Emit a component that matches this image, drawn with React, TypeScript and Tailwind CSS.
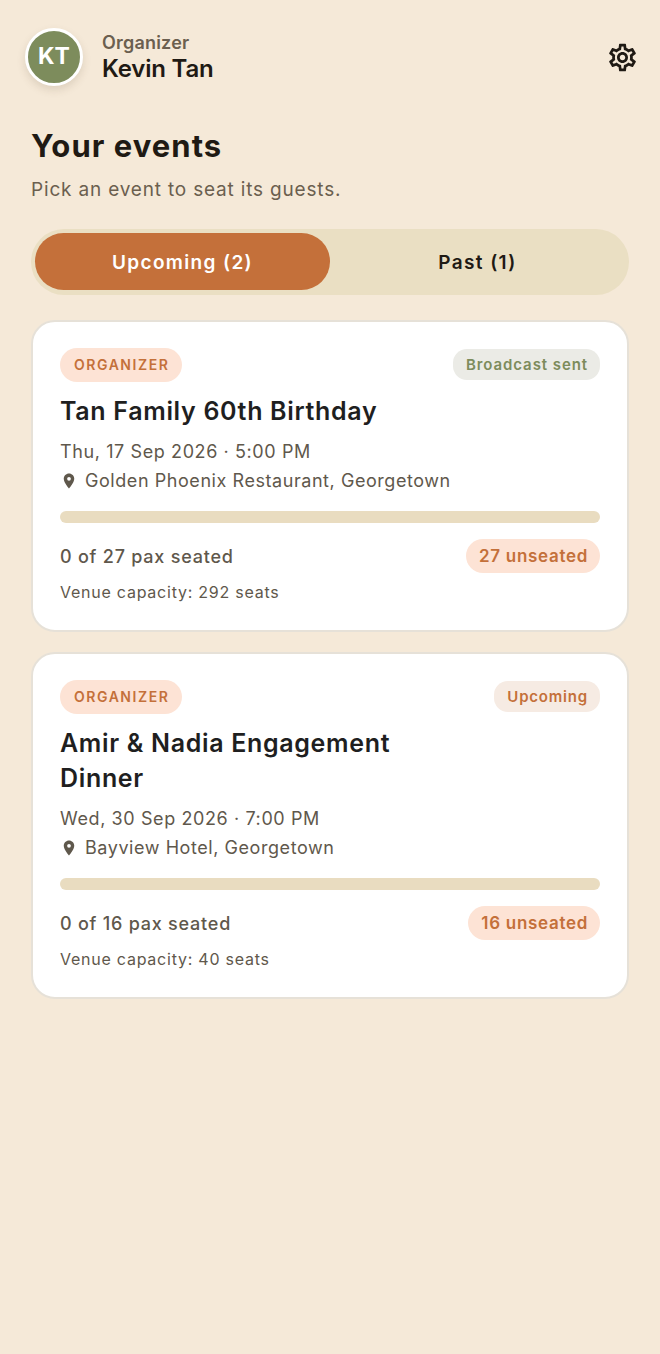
import { MdLocationOn, MdOutlineSettings } from "react-icons/md";

type EventCard = {
  title: string;
  date: string;
  venue: string;
  seated: string;
  unseated: string;
  capacity: string;
  status: string;
  statusClass: string;
};

const events: EventCard[] = [
  {
    title: "Tan Family 60th Birthday",
    date: "Thu, 17 Sep 2026 · 5:00 PM",
    venue: "Golden Phoenix Restaurant, Georgetown",
    seated: "0 of 27 pax seated",
    unseated: "27 unseated",
    capacity: "Venue capacity: 292 seats",
    status: "Broadcast sent",
    statusClass: "bg-[#ebebe6] text-[#7d8c5c] tracking-[0.92px]",
  },
  {
    title: "Amir & Nadia Engagement Dinner",
    date: "Wed, 30 Sep 2026 · 7:00 PM",
    venue: "Bayview Hotel, Georgetown",
    seated: "0 of 16 pax seated",
    unseated: "16 unseated",
    capacity: "Venue capacity: 40 seats",
    status: "Upcoming",
    statusClass: "bg-[#f6ebe3] text-[#c4703a] tracking-[0.8px]",
  },
];

function Card({ event }: { event: EventCard }) {
  return (
    <div className="rounded-[24px] border-2 border-[#e6e1d8] bg-white px-[27px] pt-[26px] pb-[26px]">
      <div className="flex items-start justify-between">
        <span className="flex h-[34px] items-center rounded-full bg-[#fde3d5] pr-[13px] pb-[1px] pl-[14px] text-[14px] font-semibold tracking-[1.55px] text-[#c4703a]">
          ORGANIZER
        </span>
        <span
          className={`mt-[1px] flex h-[31px] items-center rounded-[14px] pt-[2px] pr-[12px] pl-[13px] text-[15px] font-semibold ${event.statusClass}`}
        >
          {event.status}
        </span>
      </div>
      <h2 className="mt-[12px] w-[400px] text-[25px] leading-[35px] font-semibold tracking-[0.67px] text-[#1f1f1f]">
        {event.title}
      </h2>
      <p className="mt-[10px] text-[18px] leading-[26px] tracking-[0.6px] text-[#5f584c]">
        {event.date}
      </p>
      <div className="mt-[3px] flex items-center gap-[7px] text-[18px] leading-[26px] tracking-[0.56px] text-[#5f584c]">
        <MdLocationOn className="h-[18px] w-[18px]" />
        <span>{event.venue}</span>
      </div>
      <div className="mt-[17px] h-[12px] rounded-full bg-[#e9dcc0]" />
      <div className="mt-[16px] flex items-center justify-between">
        <span className="pt-[1px] text-[18px] font-medium tracking-[0.77px] text-[#5f584c]">
          {event.seated}
        </span>
        <span className="flex h-[34px] items-center rounded-full bg-[#fde3d5] pt-[1px] pr-[12px] pl-[13px] text-[17px] font-semibold tracking-[0.7px] text-[#c4703a]">
          {event.unseated}
        </span>
      </div>
      <p className="mt-[7px] text-[16px] leading-[24px] tracking-[0.76px] text-[#5f584c]">
        {event.capacity}
      </p>
    </div>
  );
}

export default function App() {
  return (
    <div className="min-h-[1354px] bg-[#f5e9d8] px-[31px] pt-[28px] font-['Inter',sans-serif] text-[#1f1a14]">
      <header className="-ml-[6px] flex items-center justify-between">
        <div className="flex items-center gap-[19px]">
          <div className="flex h-[58px] w-[58px] items-center justify-center rounded-full border-[3px] border-white bg-[#7d8c5c] pb-[1px] text-[23px] font-bold text-white shadow-[0_4px_8px_rgba(90,70,40,0.15)]">
            KT
          </div>
          <div>
            <p className="text-[18px] leading-[24px] font-semibold tracking-[0.2px] text-[#6b5f4f]">Organizer</p>
            <p className="-mt-[1px] text-[24px] leading-[29px] font-semibold tracking-[-0.2px]">Kevin Tan</p>
          </div>
        </div>
        <MdOutlineSettings className="-mr-[10px] h-[33px] w-[33px]" />
      </header>

      <h1 className="mt-[40px] text-[31px] leading-[40px] font-bold tracking-[1.05px]">Your events</h1>
      <p className="mt-[11px] text-[19px] leading-[26px] tracking-[0.82px] text-[#6b5f4f]">
        Pick an event to seat its guests.
      </p>

      <div className="mt-[26px] flex h-[66px] items-start rounded-full bg-[#eadfc3] p-[4px]">
        <div className="flex h-[57px] flex-1 items-center justify-center rounded-full bg-[#c4703a] pt-[3px] text-[19px] font-semibold tracking-[1.35px] text-white">
          Upcoming (2)
        </div>
        <div className="flex h-[57px] flex-1 items-center justify-center pt-[3px] text-[19px] font-semibold tracking-[1.4px]">
          Past (1)
        </div>
      </div>

      <div className="mt-[25px] flex flex-col gap-[20px]">
        {events.map((event) => (
          <Card key={event.title} event={event} />
        ))}
      </div>
    </div>
  );
}
